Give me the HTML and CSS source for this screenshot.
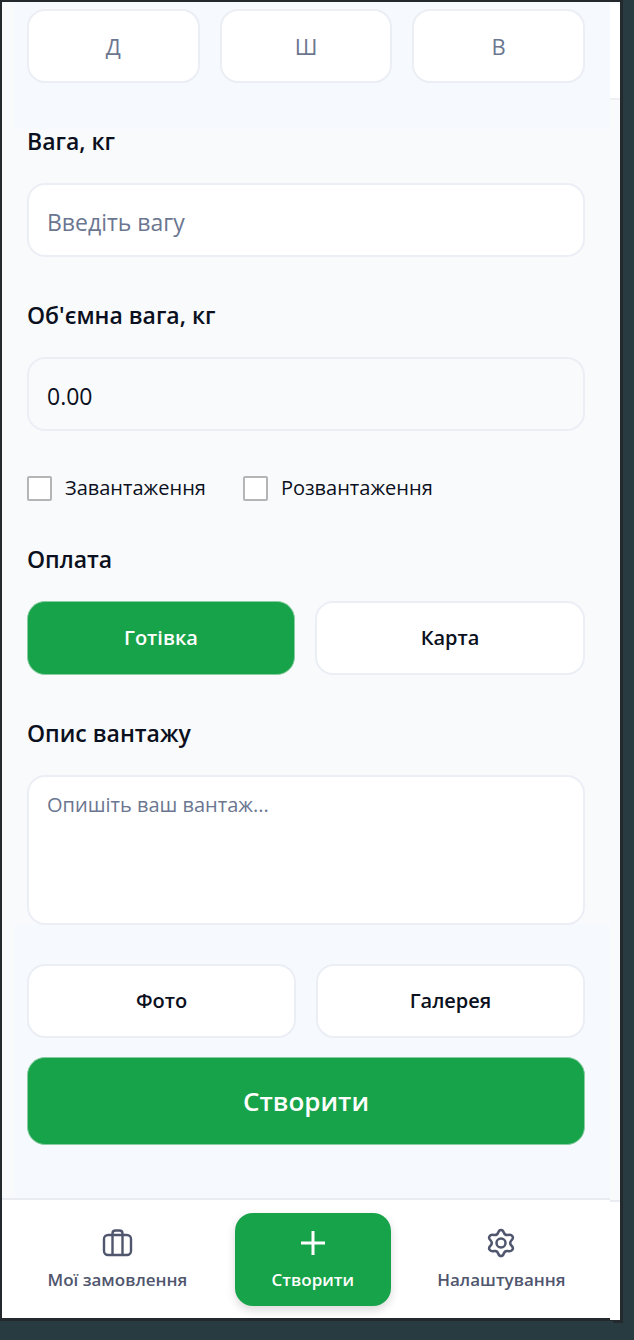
FILE: index.html
```html
<!DOCTYPE html>
<html lang="uk">
<head>
<meta charset="utf-8">
<meta name="viewport" content="width=device-width, initial-scale=1">
<title>Створити замовлення</title>
<link rel="stylesheet" href="styles.css">
</head>
<body>
<div class="window">
  <div class="screen">
    <form class="form">
      <div class="row dims">
        <input class="box center" type="text" placeholder="Д" aria-label="Довжина">
        <input class="box center" type="text" placeholder="Ш" aria-label="Ширина">
        <input class="box center" type="text" placeholder="В" aria-label="Висота">
      </div>
      <div class="field">
        <label class="label" for="weight">Вага, кг</label>
        <input class="box line" id="weight" type="text" placeholder="Введіть вагу">
      </div>
      <div class="field">
        <label class="label" for="volume">Об'ємна вага, кг</label>
        <input class="box line readonly" id="volume" type="text" value="0.00" readonly>
      </div>
      <div class="checks">
        <label class="check"><input class="tick" type="checkbox">Завантаження</label>
        <label class="check"><input class="tick" type="checkbox">Розвантаження</label>
      </div>
      <div class="field">
        <span class="label" id="pay">Оплата</span>
        <div class="row" role="group" aria-labelledby="pay">
          <button class="box button active" type="button">Готівка</button>
          <button class="box button" type="button">Карта</button>
        </div>
      </div>
      <div class="ending">
        <div class="field">
          <label class="label" for="about">Опис вантажу</label>
          <textarea class="box area" id="about" placeholder="Опишіть ваш вантаж..."></textarea>
        </div>
        <div class="actions">
          <div class="row">
            <button class="box button" type="button">Фото</button>
            <button class="box button" type="button">Галерея</button>
          </div>
          <button class="box button active submit" type="submit">Створити</button>
        </div>
      </div>
    </form>
    <nav class="nav">
      <a class="item" href="#orders">
        <svg class="icon" viewBox="0 0 32 32" fill="none" stroke="currentColor" stroke-width="2.4" aria-hidden="true">
          <rect x="3" y="8" width="27" height="20" rx="4"/>
          <path d="M11.500 28V6.500q0-3 3-3h4q3 0 3 3V28"/>
        </svg>
        Мої замовлення
      </a>
      <a class="item current" href="#create">
        <svg class="icon" viewBox="0 0 32 32" fill="none" stroke="currentColor" stroke-width="3" aria-hidden="true">
          <path d="M16 4v24M4 16h24"/>
        </svg>
        Створити
      </a>
      <a class="item" href="#settings">
        <svg class="icon" viewBox="0 0 32 32" fill="none" stroke="currentColor" stroke-width="2.5" stroke-linejoin="round" aria-hidden="true">
          <path d="M13.200 5.500Q14 3 16 3t2.800 2.500q1 3 4 2.500 3.500-.8 4.700 1.300t-1.200 4.200q-2.200 2.500 0 5 2.400 2.100 1.200 4.200t-4.700 1.300q-3-.5-4 2.500Q18 29 16 29t-2.800-2.500q-1-3-4-2.500-3.500.8-4.700-1.300t1.200-4.200q2.200-2.500 0-5Q3.300 11.400 4.500 9.300T9.200 8q3 .5 4-2.500z"/>
          <circle cx="16" cy="16" r="4.500"/>
        </svg>
        Налаштування
      </a>
    </nav>
  </div>
  <div class="edge" aria-hidden="true">
    <div class="edge-head"></div>
    <div class="edge-foot"></div>
  </div>
</div>
</body>
</html>
```
FILE: styles.css
```css
* { box-sizing: border-box; }

body {
  margin: 0;
  min-height: 100vh;
  padding: 2px 14px 22px 2px;
  background: #273b41;
  color: #0b1020;
  font: 23px/28px "Open Sans", "Noto Sans", sans-serif;
}

input, textarea, button { font: inherit; color: inherit; }

.window {
  display: flex;
  min-height: calc(100vh - 24px);
  background: #f9fafc;
  box-shadow: 0 0 0 3px #24292d;
}

.screen {
  flex: 1;
  min-width: 0;
  display: flex;
  flex-direction: column;
}

.form {
  flex: 1;
  display: flex;
  flex-direction: column;
  gap: 44px;
  padding: 7px 25px 0;
  background:
    linear-gradient(#f6f9fe, #f6f9fe) 12px 0 / 100% 127px no-repeat,
    linear-gradient(#f6f9fe, #f6f9fe) 12px 100% / 100% 274px no-repeat,
    #f9fafc;
}

.row { display: flex; gap: 20px; }
.field { display: flex; flex-direction: column; gap: 28px; }
.label { font-weight: 600; }

.box {
  flex: 1;
  width: 100%;
  min-width: 0;
  min-height: 74px;
  padding: 0 18px;
  border: 2px solid #ebeff5;
  border-radius: 18px;
  background: #fff;
}

.box::placeholder { color: #6b7690; opacity: 1; }
.center { text-align: center; font-size: 22px; }
.line { padding-top: 4px; }
.readonly { background: #f9fafc; }

.area {
  display: block;
  min-height: 150px;
  padding: 14px 18px;
  font-size: 20px;
  resize: none;
}

.button { font-size: 20px; font-weight: 600; }

.active {
  background: #17a34a;
  border: 1px solid #8acda2;
  color: #fff;
}

.checks { display: flex; gap: 37px; font-size: 20px; line-height: 26px; }
.check { display: flex; align-items: center; gap: 13px; }

.tick {
  appearance: none;
  width: 25px;
  height: 25px;
  margin: 0;
  border: 2px solid #b5b5b5;
  border-radius: 2px;
  background: #fff;
}

.ending { display: flex; flex-direction: column; gap: 39px; }
.actions { display: flex; flex-direction: column; gap: 19px; }
.submit { min-height: 88px; font-size: 26px; }

.nav {
  display: grid;
  grid-template-columns: 17fr 156px 16fr;
  gap: 2px;
  padding: 13px 0 12px;
  border-top: 2px solid #e9ecf0;
  background: #fff;
}

.item {
  display: flex;
  flex-direction: column;
  align-items: center;
  gap: 6px;
  padding: 14px 0 11px;
  color: #50566e;
  font-size: 17px;
  font-weight: 600;
  line-height: 30px;
  text-decoration: none;
}

.icon { width: 32px; height: 32px; }

.current {
  border-radius: 18px;
  background: #17a34a;
  color: #fff;
  box-shadow: 0 4px 10px #00000026;
}

.edge {
  width: 10px;
  margin: 2px 0 -2px;
  display: flex;
  flex-direction: column;
  justify-content: space-between;
  background: #f9fafc;
  box-shadow: 3px 3px 0 #24292d;
}

.edge-head { height: 96px; border-bottom: 2px solid #eff0f2; background: #fff; }
.edge-foot { height: 120px; border-top: 2px solid #e9ecf0; background: #fff; }
```
